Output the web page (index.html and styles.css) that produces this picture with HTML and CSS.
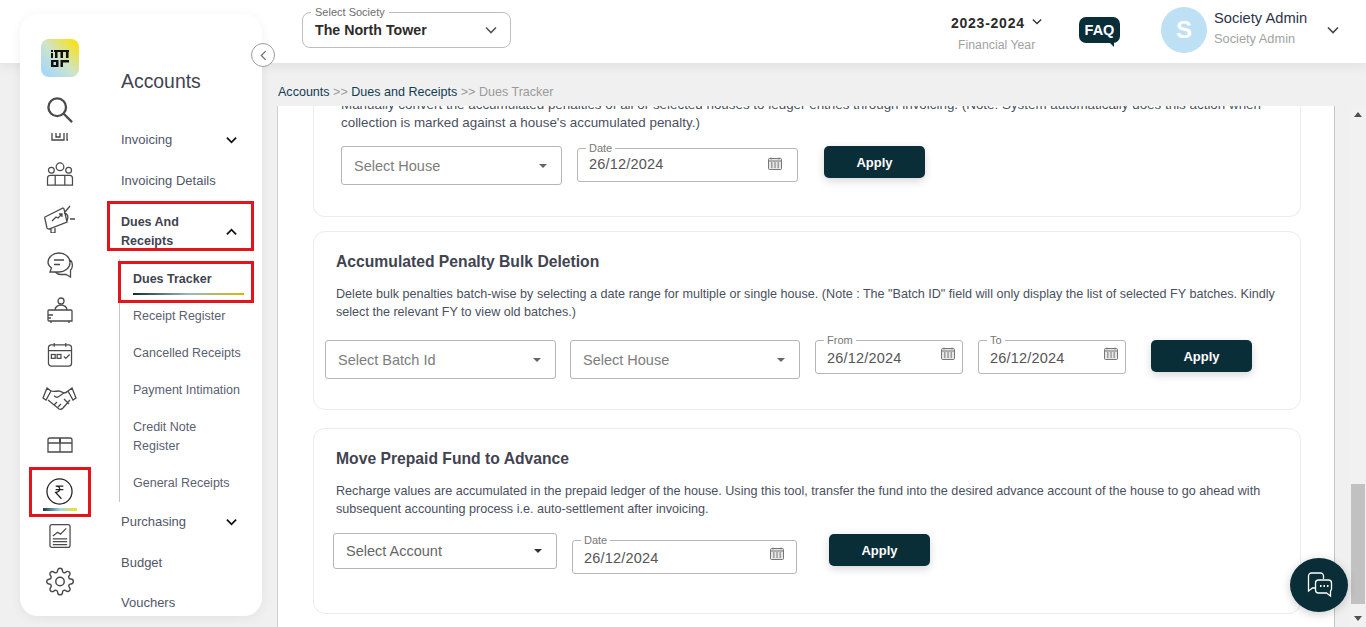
FILE: index.html
```html
<!DOCTYPE html>
<html lang="en">
<head>
<meta charset="utf-8">
<title>Dues Tracker</title>
<link rel="stylesheet" href="styles.css">
</head>
<body>
<header class="topbar">
  <fieldset class="society">
    <legend>Select Society</legend>
    <span class="society-name">The North Tower</span>
    <svg class="chev" viewBox="0 0 12 8"><path d="M1 1.500l5 5 5-5"/></svg>
  </fieldset>
  <div class="year">
    <div class="year-value">2023-2024<svg class="chev small" viewBox="0 0 12 8"><path d="M1 1.500l5 5 5-5"/></svg></div>
    <div class="year-label">Financial Year</div>
  </div>
  <div class="faq"><span>FAQ</span></div>
  <div class="avatar">S</div>
  <div class="user"><div class="user-name">Society Admin</div><div class="user-role">Society Admin</div></div>
  <svg class="chev user-chev" viewBox="0 0 12 8"><path d="M1 1.500l5 5 5-5"/></svg>
</header>

<aside class="sidebar">
  <nav class="rail">
    <div class="logo"><svg class="logo-mark" viewBox="0 0 18 17"><path d="M0 0h2v2H0zM0 3h2v5H0zM3 0h15v2H3zM4 2h2.500v6H4zM9.500 2H12v6H9.500zM15 2h2.500v6H15zM0 10h7.500v7H0zM2.500 12v3H5v-3zM9.500 10H18v2.500h-6V17H9.500z" fill-rule="evenodd"/></svg></div>
    <svg class="ic search" viewBox="0 0 28 28"><circle cx="11" cy="11" r="9.500"/><path d="M18 18l9 9"/></svg>
    <div class="clip"><svg viewBox="0 0 18 8"><path d="M1 0v7h12V0M5 0v4h4V0M16 0v7h1"/></svg></div>
    <svg class="ic i1" viewBox="0 0 28 25"><circle cx="14" cy="5" r="4"/><circle cx="5" cy="8.500" r="3"/><circle cx="23" cy="8.500" r="3"/><path d="M1 24v-7a3 3 0 0 1 3-3h20a3 3 0 0 1 3 3v7zM9 24V14M19 24V14"/></svg>
    <svg class="ic i2" viewBox="0 0 31 28"><path d="M1 12L19 3a2 2 0 0 1 1 1l3 13L5 24a2 2 0 0 1-2-1L1 14a2 2 0 0 1 0-2zM7 24v4h4v-5M20 8c3 0 5 3 3 8M21 7l5-6M26 14h5M8 16l4-4 2 1 4-4M15 9h3v3"/></svg>
    <svg class="ic i3" viewBox="0 0 26 26"><path d="M12 1c6 0 11 4 11 9.500S18 20 12 20H3l1.500-4C2 14 1 12 1 10.500 1 5 6 1 12 1zM7 8h10M7 12.500h6M23.500 8c2.500 3 2.500 8 0 10v7L19 22.500h-5c-3 0-4.500-1-6-2.500"/></svg>
    <svg class="ic i4" viewBox="0 0 26 27"><circle cx="14" cy="4" r="3"/><path d="M8 13c0-3 3-5 6-5s6 2 6 5M2 13h22a1 1 0 0 1 1 1v10H2a1 1 0 0 1-1-1V14a1 1 0 0 1 1-1zM1 18h5M1 21h3M4 24v2M22 24v2"/></svg>
    <svg class="ic i5" viewBox="0 0 26 26"><rect x="1" y="3" width="24" height="22" rx="3"/><path d="M1 9h24M7 1v4M19 1v4"/><rect x="4" y="13" width="4" height="4"/><rect x="10" y="13" width="4" height="4"/><path d="M17 15l2 2 4-4"/></svg>
    <svg class="ic i6" viewBox="0 0 35 24"><path d="M5 1L1 11l3 2 5-9zM30 1l4 10-3 2-5-9zM9 4c3 1 5 0 8 0l5 2-6 4c-2 1-3-1-4-1M26 4c-2 2-3 2-4 2M6 13l11 9c2 1 3 0 4-1l7-8M12 18l3-3M16 20l3-3M22 12l5 5"/></svg>
    <svg class="ic i7" viewBox="0 0 26 16"><path d="M1 6V3a2 2 0 0 1 2-2h20a2 2 0 0 1 2 2v3zM1 6h24v9H1zM13 1v14"/><path class="knot" d="M12 1.500h2v4h-2z"/></svg>
    <div class="rail-active">
      <svg class="rupee" viewBox="0 0 28 28"><circle cx="14" cy="14" r="13"/><path d="M10 8.500h8M10 12h8M10.500 8.500c4.500 0 5.500 5.500-.5 6.500l6 6.500"/></svg>
      <div class="rail-bar"></div>
    </div>
    <svg class="ic i8" viewBox="0 0 23 26"><rect x="1" y="1" width="21" height="24" rx="2"/><path d="M4 13l5-4 3 2 6-6M4 16h15M4 19h15M4 22h15"/></svg>
    <svg class="ic i9" viewBox="0 0 24 24"><circle cx="12" cy="12" r="3.500"/><path d="M19.400 15a1.650 1.650 0 0 0 .33 1.820l.06.06a2 2 0 0 1 0 2.830 2 2 0 0 1-2.830 0l-.06-.06a1.650 1.650 0 0 0-1.820-.33 1.650 1.650 0 0 0-1 1.510V21a2 2 0 0 1-2 2 2 2 0 0 1-2-2v-.09A1.650 1.650 0 0 0 9 19.400a1.650 1.650 0 0 0-1.820.33l-.06.06a2 2 0 0 1-2.830 0 2 2 0 0 1 0-2.830l.06-.06a1.650 1.650 0 0 0 .33-1.820 1.650 1.650 0 0 0-1.510-1H3a2 2 0 0 1-2-2 2 2 0 0 1 2-2h.09A1.650 1.650 0 0 0 4.600 9a1.650 1.650 0 0 0-.33-1.820l-.06-.06a2 2 0 0 1 0-2.830 2 2 0 0 1 2.830 0l.06.06a1.650 1.650 0 0 0 1.820.33H9a1.650 1.650 0 0 0 1-1.510V3a2 2 0 0 1 2-2 2 2 0 0 1 2 2v.09a1.650 1.650 0 0 0 1 1.510 1.650 1.650 0 0 0 1.820-.33l.06-.06a2 2 0 0 1 2.830 0 2 2 0 0 1 0 2.830l-.06.06a1.650 1.650 0 0 0-.33 1.820V9a1.650 1.650 0 0 0 1.510 1H21a2 2 0 0 1 2 2 2 2 0 0 1-2 2h-.09a1.650 1.650 0 0 0-1.510 1z"/></svg>
  </nav>

  <div class="menu">
    <h2 class="menu-title">Accounts</h2>
    <div class="menu-item first">Invoicing<svg class="mchev" viewBox="0 0 12 8"><path d="M1 1.500l5 5 5-5"/></svg></div>
    <div class="menu-item">Invoicing Details</div>
    <div class="menu-item open"><span>Dues And<br>Receipts</span><svg class="mchev" viewBox="0 0 12 8"><path d="M1 6.500l5-5 5 5"/></svg></div>
    <div class="submenu">
      <div class="sub-item current">Dues Tracker</div>
      <div class="sub-item">Receipt Register</div>
      <div class="sub-item">Cancelled Receipts</div>
      <div class="sub-item">Payment Intimation</div>
      <div class="sub-item">Credit Note<br>Register</div>
      <div class="sub-item">General Receipts</div>
    </div>
    <div class="menu-item purchasing">Purchasing<svg class="mchev" viewBox="0 0 12 8"><path d="M1 1.500l5 5 5-5"/></svg></div>
    <div class="menu-item">Budget</div>
    <div class="menu-item last">Vouchers</div>
  </div>
  <div class="collapse"><svg viewBox="0 0 8 12"><path d="M6.500 1L1.500 6l5 5"/></svg></div>
</aside>
<div class="hl hl-rail"></div>
<div class="hl hl-group"></div>
<div class="hl hl-current"></div>

<div class="crumbs"><span class="crumb-dark">Accounts</span> &gt;&gt; <span class="crumb-dark">Dues and Receipts</span> &gt;&gt; Dues Tracker</div>

<main class="panel">
  <section class="card card-a">
    <p class="desc">Manually convert the accumulated penalties of all or selected houses to ledger entries through invoicing. (Note: System automatically does this action when collection is marked against a house's accumulated penalty.)</p>
    <div class="row row-a">
      <div class="select w221 tall"><span>Select House</span><i class="caret"></i></div>
      <fieldset class="date w221 m1"><legend>Date</legend><span>26/12/2024</span><svg class="cal" viewBox="0 0 14 13"><rect x=".5" y="1.500" width="13" height="11" rx="1"/><path d="M3 .5v2M11 .5v2M.5 4h13"/><path class="dots" d="M3 6h1.500M6.300 6h1.500M9.500 6H11M3 8h1.500M6.300 8h1.500M9.500 8H11M3 10h1.500M6.300 10h1.500M9.500 10H11"/></svg></fieldset>
      <button class="apply m2">Apply</button>
    </div>
  </section>

  <section class="card card-b">
    <h3 class="title">Accumulated Penalty Bulk Deletion</h3>
    <p class="desc">Delete bulk penalties batch-wise by selecting a date range for multiple or single house. (Note : The "Batch ID" field will only display the list of selected FY batches. Kindly select the relevant FY to view old batches.)</p>
    <div class="row row-b">
      <div class="select w231 tall"><span>Select Batch Id</span><i class="caret"></i></div>
      <div class="select w230 tall"><span>Select House</span><i class="caret"></i></div>
      <fieldset class="date w148"><legend>From</legend><span>26/12/2024</span><svg class="cal" viewBox="0 0 14 13"><rect x=".5" y="1.500" width="13" height="11" rx="1"/><path d="M3 .5v2M11 .5v2M.5 4h13"/><path class="dots" d="M3 6h1.500M6.300 6h1.500M9.500 6H11M3 8h1.500M6.300 8h1.500M9.500 8H11M3 10h1.500M6.300 10h1.500M9.500 10H11"/></svg></fieldset>
      <fieldset class="date w148"><legend>To</legend><span>26/12/2024</span><svg class="cal" viewBox="0 0 14 13"><rect x=".5" y="1.500" width="13" height="11" rx="1"/><path d="M3 .5v2M11 .5v2M.5 4h13"/><path class="dots" d="M3 6h1.500M6.300 6h1.500M9.500 6H11M3 8h1.500M6.300 8h1.500M9.500 8H11M3 10h1.500M6.300 10h1.500M9.500 10H11"/></svg></fieldset>
      <button class="apply m3">Apply</button>
    </div>
  </section>

  <section class="card card-c">
    <h3 class="title">Move Prepaid Fund to Advance</h3>
    <p class="desc">Recharge values are accumulated in the prepaid ledger of the house. Using this tool, transfer the fund into the desired advance account of the house to go ahead with subsequent accounting process i.e. auto-settlement after invoicing.</p>
    <div class="row row-c">
      <div class="select w224 short"><span class="dark">Select Account</span><i class="caret dark"></i></div>
      <fieldset class="date w225 m4"><legend>Date</legend><span>26/12/2024</span><svg class="cal" viewBox="0 0 14 13"><rect x=".5" y="1.500" width="13" height="11" rx="1"/><path d="M3 .5v2M11 .5v2M.5 4h13"/><path class="dots" d="M3 6h1.500M6.300 6h1.500M9.500 6H11M3 8h1.500M6.300 8h1.500M9.500 8H11M3 10h1.500M6.300 10h1.500M9.500 10H11"/></svg></fieldset>
      <button class="apply m5">Apply</button>
    </div>
  </section>
</main>

<div class="scrollbar"><i class="arrow up"></i><div class="thumb"></div><i class="arrow down"></i></div>

<div class="fab"><svg viewBox="0 0 26 26"><path d="M17 7V4a3 3 0 0 0-3-3H5a3 3 0 0 0-3 3v15l4-3h3"/><path d="M12 8h10a3 3 0 0 1 3 3v6a3 3 0 0 1-1 2v5l-4-3h-8a3 3 0 0 1-3-3v-7a3 3 0 0 1 3-3z"/><path class="fab-dots" d="M13.500 14h1.500M17 14h1.500M20.500 14H22"/></svg></div>
</body>
</html>
```
FILE: styles.css
```css
* { box-sizing: border-box; }
html, body { height: 100%; }
body {
  margin: 0;
  height: 627px;
  overflow: hidden;
  background: #f0f0f0;
  color: #3f4450;
  font-family: "Liberation Sans", Arial, sans-serif;
  font-size: 13px;
}

/* Header */
.topbar {
  position: relative;
  z-index: 2;
  height: 63px;
  background: #fff;
  box-shadow: 0 2px 12px rgba(0,0,0,.08);
  display: flex;
  align-items: flex-start;
  padding-left: 302px;
}
.society {
  margin: 6px 0 0;
  padding: 0 0 0 12px;
  width: 209px;
  height: 42px;
  border: 1px solid #bdbdbd;
  border-radius: 8px;
  display: flex;
  align-items: center;
  justify-content: space-between;
  min-inline-size: 0;
}
.society legend { font-size: 11px; color: #6d6d6d; padding: 0 4px; margin-left: -4px; line-height: 12px; }
.society-name { font-size: 14.200px; font-weight: 700; color: #2b2b2b; margin-top: -5px; }
.chev { fill: none; stroke: #555; stroke-width: 1.600; width: 12px; height: 8px; }
.society .chev { margin: -6px 13px 0 0; }
.year { margin-left: 440px; width: 100px; padding-top: 15px; }
.year-value { font-size: 14px; font-weight: 700; color: #2b2b2b; letter-spacing: .75px; display: flex; align-items: center; line-height: 17px; }
.chev.small { width: 10px; height: 7px; margin: -4px 0 0 7px; stroke: #333; }
.year-label { font-size: 12.300px; color: #a2a2a2; margin: 6px 0 0 7px; line-height: 15px; }
.faq {
  margin: 17px 0 0 28px;
  width: 41px;
  height: 26px;
  background: #0a2e38;
  border-radius: 7px;
  color: #fff;
  font-weight: 700;
  font-size: 14.500px;
  display: flex;
  align-items: center;
  justify-content: center;
  position: relative;
}
.faq::after {
  content: "";
  position: absolute;
  right: 6px;
  bottom: -4px;
  border-top: 5px solid #0a2e38;
  border-left: 5px solid transparent;
}
.avatar {
  margin: 7px 0 0 41px;
  width: 46px;
  height: 46px;
  border-radius: 50%;
  background: #bde0f5;
  color: #fff;
  font-size: 24px;
  font-weight: 700;
  display: flex;
  align-items: center;
  justify-content: center;
}
.user { margin: 10px 0 0 7px; width: 113px; }
.user-name { font-size: 14.700px; color: #2d3348; line-height: 17px; }
.user-role { font-size: 12.800px; color: #a2a2a2; line-height: 15px; margin-top: 4px; }
.user-chev { margin-top: 26px; stroke: #444; }

/* Sidebar */
.sidebar {
  position: absolute;
  z-index: 3;
  left: 20px;
  top: 14px;
  width: 242px;
  height: 602px;
  background: #fff;
  border-radius: 18px;
  box-shadow: 0 2px 12px rgba(0,0,0,.06);
  display: flex;
}
.rail {
  width: 79px;
  flex: none;
  display: flex;
  flex-direction: column;
  align-items: center;
  padding: 25px 0 0 0;
}
.logo {
  width: 38px;
  height: 38px;
  border-radius: 8px;
  background: linear-gradient(45deg, #a8d8f8 12%, #cfe4c8 50%, #f7e21d 90%);
  display: flex;
  align-items: center;
  justify-content: center;
}
.logo-mark { width: 18px; height: 17px; fill: #111; }
.ic { fill: none; stroke: #4a4a4a; stroke-width: 1.300; display: block; flex: none; }
.search { width: 26px; height: 28px; margin-top: 19px; stroke-width: 2.500; }
.clip { width: 18px; height: 8px; margin-top: 9px; overflow: hidden; flex: none; }
.clip svg { display: block; width: 18px; height: 8px; fill: none; stroke: #444; stroke-width: 1.300; }
.i1 { width: 28px; height: 24px; margin-top: 21px; }
.i2 { width: 31px; height: 28px; margin-top: 19px; }
.i3 { width: 26px; height: 26px; margin-top: 19px; }
.i4 { width: 26px; height: 27px; margin-top: 19px; }
.i5 { width: 26px; height: 25px; margin-top: 18px; }
.i6 { width: 35px; height: 24px; margin-top: 20px; }
.i7 { width: 26px; height: 16px; margin-top: 26px; }
.i7 .knot { fill: #4a4a4a; stroke: none; }
.rail-active { width: 34px; margin-top: 25px; flex: none; }
.rupee { display: block; width: 27px; height: 27px; margin: 0 auto; fill: none; stroke: #222; stroke-width: 1.300; }
.rail-bar { height: 3px; margin-top: 3px; background: linear-gradient(90deg, #1c3a45, #a8d3e8, #f7e21d); }
.i8 { width: 22px; height: 26px; margin-top: 12px; }
.i9 { width: 30px; height: 29px; margin-top: 18px; stroke-width: 1.200; }

.menu { flex: 1; padding: 0 11px 0 22px; min-width: 0; overflow: hidden; }
.menu-title { margin: 56px 0 0; font-size: 19.400px; font-weight: 400; color: #3f4450; line-height: 22px; }
.menu-item {
  display: flex;
  align-items: center;
  justify-content: space-between;
  font-size: 13px;
  line-height: 19px;
  color: #50566a;
  margin-top: 22px;
  padding-right: 1px;
}
.menu-item.first { margin-top: 38px; }
.menu-item.open { font-weight: 700; font-size: 12.500px; color: #3f4450; margin-top: 23px; }
.menu-item.purchasing { margin-top: 10px; }
.menu-item.last { margin-top: 21px; }
.mchev { width: 11px; height: 8px; fill: none; stroke: #111; stroke-width: 2; flex: none; margin-right: 13px; }
.submenu { margin: 8px 0 0 -2px; border-left: 1px solid #c6c6c6; padding-left: 13px; height: 243px; }
.sub-item { font-size: 12.500px; line-height: 19px; color: #5b6070; margin-top: 18px; }
.sub-item:first-child { margin-top: 0; padding-top: 11px; }
.sub-item.current { font-weight: 700; color: #3f4450; height: 30px; position: relative; }
.sub-item.current::after {
  content: "";
  position: absolute;
  left: 0;
  right: 7px;
  bottom: -6px;
  height: 2px;
  background: linear-gradient(90deg, #0a2e38, #9ab8c4, #d4b60c);
}
.collapse {
  position: absolute;
  left: 231px;
  top: 29px;
  width: 24px;
  height: 24px;
  border-radius: 50%;
  background: #fff;
  border: 1px solid #9b9b9b;
  display: flex;
  align-items: center;
  justify-content: center;
}
.collapse svg { width: 7px; height: 11px; fill: none; stroke: #777; stroke-width: 1.600; }

/* Review highlights */
.hl { position: absolute; z-index: 4; border: 3px solid #e3141c; pointer-events: none; }
.hl-rail { left: 29px; top: 467px; width: 62px; height: 50px; }
.hl-group { left: 107px; top: 201px; width: 147px; height: 50px; }
.hl-current { left: 118px; top: 261px; width: 136px; height: 42px; }

/* Breadcrumbs */
.crumbs {
  margin-left: 278px;
  height: 43px;
  padding-top: 21px;
  line-height: 16px;
  font-size: 12.550px;
  color: #9a9a9a;
}
.crumb-dark { color: #123c52; }

/* Panel */
.panel {
  margin-left: 277px;
  width: 1058px;
  height: 521px;
  background: #fff;
  border-left: 1px solid #d0d0d0;
  border-right: 1px solid #c4c4c4;
  overflow: hidden;
  padding: 0 33px 0 35px;
}
.card { border: 1px solid #ececec; border-radius: 12px; background: #fff; }
.card-a { height: 152px; margin-top: -41px; border-radius: 0 0 12px 12px; padding: 30px 26px 0 27px; border-top-color: transparent; }
.card-b { height: 179px; margin-top: 14px; padding: 20px 0 0 22px; }
.card-c { height: 186px; margin-top: 18px; padding: 20px 0 0 22px; }
.title { margin: 0; font-size: 15.700px; font-weight: 700; line-height: 20px; color: #3f4450; }
.desc { margin: 13px 0 0; font-size: 12.600px; line-height: 18px; color: #4a4f5e; width: 945px; }
.card-a .desc { margin-top: 0; font-size: 13.400px; width: 935px; }
.row { display: flex; align-items: flex-start; }
.row-a { margin-top: 14px; }
.row-b { margin: 19px 0 0 -11px; gap: 14px; }
.row-b .date { margin: -5px 0 0 1px; }
.row-c { margin: 15px 0 0 -3px; }
.select {
  border: 1px solid #b5b5b5;
  border-radius: 3px;
  display: flex;
  align-items: center;
  justify-content: space-between;
  padding: 0 14px 0 12px;
  font-size: 14.500px;
  color: #7d7d7d;
  flex: none;
}
.select .dark { color: #666; }
.select.tall { height: 39px; }
.select.short { height: 36px; }
.caret { border-top: 4px solid #666; border-left: 4px solid transparent; border-right: 4px solid transparent; }
.caret.dark { border-top-color: #333; }
.w221 { width: 221px; }
.w231 { width: 231px; }
.w230 { width: 230px; }
.w224 { width: 224px; }
.w225 { width: 225px; }
.w148 { width: 148px; }
.date {
  margin: 0;
  padding: 0 7px 0 11px;
  height: 39px;
  border: 1px solid #b5b5b5;
  border-radius: 3px;
  display: flex;
  justify-content: space-between;
  align-items: flex-start;
  color: #555;
  font-size: 14.500px;
  letter-spacing: .2px;
  min-inline-size: 0;
  flex: none;
}
.date.w221 { padding-right: 15px; }
.date.w225 { padding-right: 12px; }
.date legend { font-size: 11px; letter-spacing: 0; color: #777; padding: 0 3px; margin-left: -3px; line-height: 10px; height: 10px; }
.date span { line-height: 17px; margin-top: 5px; }
.date.w221 span { margin-top: 3px; }
.cal { width: 14px; height: 13px; fill: #e6e6e6; stroke: #777; stroke-width: 1; flex: none; margin-top: 2px; }
.date.w221 .cal { margin-top: 4px; }
.cal .dots { stroke: #555; }
.apply {
  flex: none;
  height: 32px;
  width: 101px;
  border: 0;
  border-radius: 5px;
  background: #0a2e38;
  color: #fff;
  font: 700 13px "Liberation Sans", Arial, sans-serif;
  box-shadow: 0 3px 8px rgba(0,0,0,.16);
}
.m1 { margin-left: 15px; margin-top: -3px; }
.m2 { margin-left: 26px; margin-top: 0; }
.m3 { margin-left: 11px; }
.m4 { margin: 2px 0 0 15px; }
.m5 { margin: 1px 0 0 32px; }

/* Page scrollbar */
.scrollbar { position: absolute; z-index: 1; left: 1350px; top: 106px; width: 16px; height: 521px; background: #f1f1f1; }
.thumb { position: absolute; left: 1px; top: 378px; width: 14px; height: 120px; background: #c1c1c1; }
.arrow { position: absolute; left: 4px; border-left: 4px solid transparent; border-right: 4px solid transparent; }
.arrow.up { top: 6px; border-bottom: 5px solid #505050; }
.arrow.down { bottom: 6px; border-top: 5px solid #505050; }

/* Chat */
.fab {
  position: absolute;
  z-index: 5;
  left: 1290px;
  top: 558px;
  width: 58px;
  height: 54px;
  border-radius: 50%;
  background: #0a2e38;
  box-shadow: 0 2px 10px rgba(0,0,0,.2);
  display: flex;
  align-items: center;
  justify-content: center;
}
.fab svg { width: 27px; height: 26px; fill: none; stroke: #fff; stroke-width: 1.300; }
.fab .fab-dots { stroke-width: 2; }
```
